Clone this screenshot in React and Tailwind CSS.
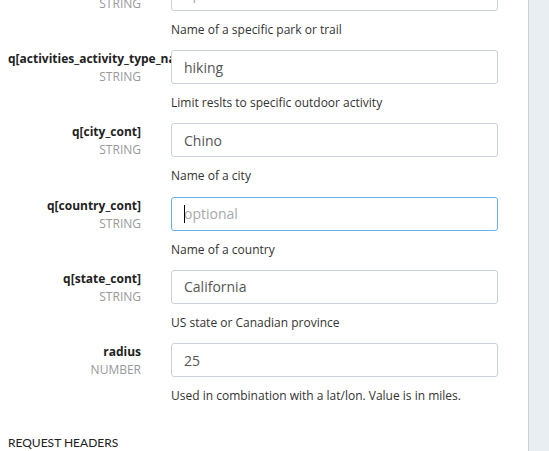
import React from "react"

const params = [
    { name: "q[name_cont]", type: "STRING", value: "", description: "Name of a specific park or trail" },
    { name: "q[activities_activity_type_name_eq]", type: "STRING", value: "hiking", description: "Limit reslts to specific outdoor activity" },
    { name: "q[city_cont]", type: "STRING", value: "Chino", description: "Name of a city" },
    { name: "q[country_cont]", type: "STRING", value: "", description: "Name of a country", focused: true },
    { name: "q[state_cont]", type: "STRING", value: "California", description: "US state or Canadian province" },
    { name: "radius", type: "NUMBER", value: "25", description: "Used in combination with a lat/lon. Value is in miles." },
]

const ParamRow = ({ param }) => {
    return (
        <div className="flex mb-[10.33px]">
            <div className="w-[171px] shrink-0 overflow-hidden pl-2 pr-[30px] pt-[1px] text-right text-[12px] leading-4">
                <div className="whitespace-nowrap font-bold text-[#222]">{param.name}</div>
                <div className="mt-[2px] text-[#999]">{param.type}</div>
            </div>
            <div className="w-[327px]">
                <div className="relative">
                    <input
                        readOnly
                        value={param.value}
                        placeholder="optional"
                        className={
                            param.focused
                                ? "block h-[34px] w-full rounded-[3px] border border-[#66afe9] bg-white px-3 text-[14px] text-[#555] outline-none placeholder:text-[#a9a9a9]"
                                : "block h-[34px] w-full rounded-[3px] border border-[#c9d0d8] bg-white px-3 text-[14px] text-[#555] outline-none placeholder:text-[#a9a9a9]"
                        }
                    />
                    {param.focused && <span className="absolute left-[13px] top-[8px] h-[18px] w-px bg-black"></span>}
                </div>
                <p className="mt-[9px] text-[12px] leading-5 text-[#333]">{param.description}</p>
            </div>
        </div>
    )
}

const App = () => {
    return (
        <div className="flex h-[451px] w-[549px] overflow-hidden bg-white font-['Open_Sans',sans-serif]">
            <div className="flex-1">
                <div className="mt-[-23.33px]">
                    {params.map((param) => (
                        <ParamRow key={param.name} param={param} />
                    ))}
                </div>
                <h3 className="mt-[29px] pl-2 font-['Lato',sans-serif] text-[12px] leading-4 text-[#222]">REQUEST HEADERS</h3>
            </div>
            <div className="w-[21px] shrink-0 border-l border-[#c8d0da] bg-[#e9eef3]"></div>
        </div>
    )
}

export default App
